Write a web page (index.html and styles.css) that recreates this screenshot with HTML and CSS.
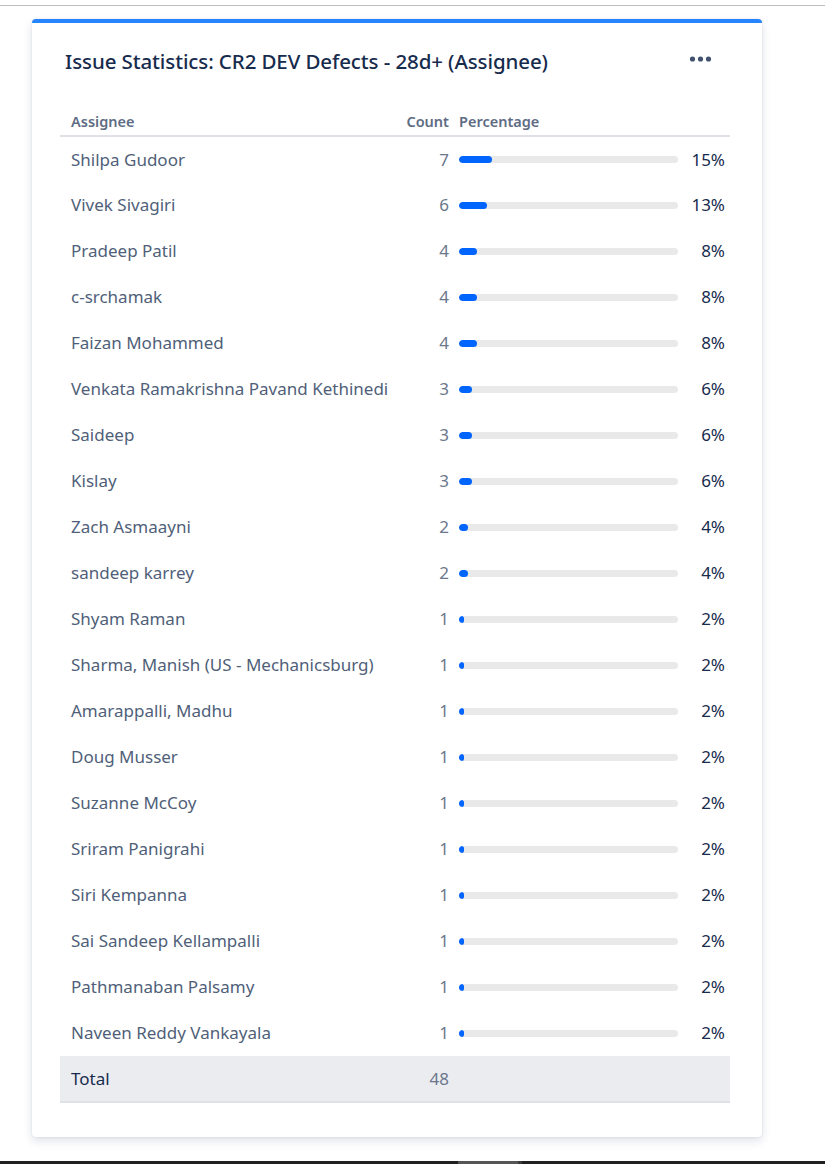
FILE: index.html
```html
<!DOCTYPE html>
<html lang="en">
<head>
<meta charset="utf-8">
<title>Issue Statistics</title>
<link rel="stylesheet" href="styles.css">
</head>
<body>
<div class="topline"></div>
<div class="page">
  <section class="card">
    <header class="card-head">
      <h2 class="title">Issue Statistics: CR2 DEV Defects - 28d+ (Assignee)</h2>
      <button class="more" aria-label="More">
        <svg width="24" height="10" viewBox="0 0 24 10"><circle cx="4.5" cy="5" r="2.6"/><circle cx="12.5" cy="5" r="2.6"/><circle cx="20.5" cy="5" r="2.6"/></svg>
      </button>
    </header>
    <table class="stats">
      <colgroup><col class="c-name"><col class="c-count"><col class="c-pct"></colgroup>
      <thead>
        <tr><th class="name">Assignee</th><th class="count">Count</th><th class="pct">Percentage</th></tr>
      </thead>
      <tbody>
        <tr><td class="name">Shilpa Gudoor</td><td class="count">7</td><td class="pct"><div class="pc"><div class="bar"><div class="fill" style="width:15%"></div></div><span class="pv">15%</span></div></td></tr>
        <tr><td class="name">Vivek Sivagiri</td><td class="count">6</td><td class="pct"><div class="pc"><div class="bar"><div class="fill" style="width:13%"></div></div><span class="pv">13%</span></div></td></tr>
        <tr><td class="name">Pradeep Patil</td><td class="count">4</td><td class="pct"><div class="pc"><div class="bar"><div class="fill" style="width:8%"></div></div><span class="pv">8%</span></div></td></tr>
        <tr><td class="name">c-srchamak</td><td class="count">4</td><td class="pct"><div class="pc"><div class="bar"><div class="fill" style="width:8%"></div></div><span class="pv">8%</span></div></td></tr>
        <tr><td class="name">Faizan Mohammed</td><td class="count">4</td><td class="pct"><div class="pc"><div class="bar"><div class="fill" style="width:8%"></div></div><span class="pv">8%</span></div></td></tr>
        <tr><td class="name">Venkata Ramakrishna Pavand Kethinedi</td><td class="count">3</td><td class="pct"><div class="pc"><div class="bar"><div class="fill" style="width:6%"></div></div><span class="pv">6%</span></div></td></tr>
        <tr><td class="name">Saideep</td><td class="count">3</td><td class="pct"><div class="pc"><div class="bar"><div class="fill" style="width:6%"></div></div><span class="pv">6%</span></div></td></tr>
        <tr><td class="name">Kislay</td><td class="count">3</td><td class="pct"><div class="pc"><div class="bar"><div class="fill" style="width:6%"></div></div><span class="pv">6%</span></div></td></tr>
        <tr><td class="name">Zach Asmaayni</td><td class="count">2</td><td class="pct"><div class="pc"><div class="bar"><div class="fill" style="width:4%"></div></div><span class="pv">4%</span></div></td></tr>
        <tr><td class="name">sandeep karrey</td><td class="count">2</td><td class="pct"><div class="pc"><div class="bar"><div class="fill" style="width:4%"></div></div><span class="pv">4%</span></div></td></tr>
        <tr><td class="name">Shyam Raman</td><td class="count">1</td><td class="pct"><div class="pc"><div class="bar"><div class="fill" style="width:2%"></div></div><span class="pv">2%</span></div></td></tr>
        <tr><td class="name">Sharma, Manish (US - Mechanicsburg)</td><td class="count">1</td><td class="pct"><div class="pc"><div class="bar"><div class="fill" style="width:2%"></div></div><span class="pv">2%</span></div></td></tr>
        <tr><td class="name">Amarappalli, Madhu</td><td class="count">1</td><td class="pct"><div class="pc"><div class="bar"><div class="fill" style="width:2%"></div></div><span class="pv">2%</span></div></td></tr>
        <tr><td class="name">Doug Musser</td><td class="count">1</td><td class="pct"><div class="pc"><div class="bar"><div class="fill" style="width:2%"></div></div><span class="pv">2%</span></div></td></tr>
        <tr><td class="name">Suzanne McCoy</td><td class="count">1</td><td class="pct"><div class="pc"><div class="bar"><div class="fill" style="width:2%"></div></div><span class="pv">2%</span></div></td></tr>
        <tr><td class="name">Sriram Panigrahi</td><td class="count">1</td><td class="pct"><div class="pc"><div class="bar"><div class="fill" style="width:2%"></div></div><span class="pv">2%</span></div></td></tr>
        <tr><td class="name">Siri Kempanna</td><td class="count">1</td><td class="pct"><div class="pc"><div class="bar"><div class="fill" style="width:2%"></div></div><span class="pv">2%</span></div></td></tr>
        <tr><td class="name">Sai Sandeep Kellampalli</td><td class="count">1</td><td class="pct"><div class="pc"><div class="bar"><div class="fill" style="width:2%"></div></div><span class="pv">2%</span></div></td></tr>
        <tr><td class="name">Pathmanaban Palsamy</td><td class="count">1</td><td class="pct"><div class="pc"><div class="bar"><div class="fill" style="width:2%"></div></div><span class="pv">2%</span></div></td></tr>
        <tr><td class="name">Naveen Reddy Vankayala</td><td class="count">1</td><td class="pct"><div class="pc"><div class="bar"><div class="fill" style="width:2%"></div></div><span class="pv">2%</span></div></td></tr>
      </tbody>
      <tfoot>
        <tr><td class="name">Total</td><td class="count">48</td><td class="pct"></td></tr>
      </tfoot>
    </table>
  </section>
</div>
<div class="taskbar"><span class="tb-a"></span><span class="tb-b"></span><span class="tb-c"></span><span class="tb-d"></span></div>
</body>
</html>
```

FILE: styles.css
```css
* { box-sizing: border-box; }

html, body {
  margin: 0;
  padding: 0;
  background: #ffffff;
}

body {
  width: 825px;
  height: 1164px;
  overflow: hidden;
  font-family: "Noto Sans", "Open Sans", sans-serif;
  color: #172b4d;
  display: flex;
  flex-direction: column;
}

.topline {
  margin-top: 5px;
  height: 1px;
  background: #bdbdbd;
}

.page {
  flex: 1;
  padding: 13px 0 0 32px;
}

.card {
  width: 730px;
  background: #fff;
  border-top: 4px solid #2684ff;
  border-radius: 4px;
  box-shadow: 0 4px 10px rgba(9, 30, 66, 0.13), 0 0 2px rgba(9, 30, 66, 0.12);
  padding: 24px 32px 34px 28px;
}

.card-head {
  display: flex;
  align-items: center;
  justify-content: space-between;
  height: 28px;
  padding-left: 5px;
}

.title {
  margin: 0;
  font-size: 20.5px;
  font-weight: 500;
  line-height: 28px;
  color: #172b4d;
  letter-spacing: -0.1px;
}

.more {
  border: 0;
  background: none;
  padding: 0;
  margin-right: 18px;
  margin-top: -4px;
  width: 24px;
  height: 10px;
  display: flex;
}

.more svg { fill: #42526e; }

.stats {
  width: 670px;
  margin-top: 33px;
  border-collapse: collapse;
  table-layout: fixed;
}

.c-name { width: 330px; }
.c-count { width: 64px; }
.c-pct { width: 276px; }

.stats th {
  font-size: 14.5px;
  font-weight: 600;
  color: #5e6c84;
  height: 28px;
  padding: 0 5px 4px 11px;
  vertical-align: bottom;
  text-align: left;
  border-bottom: 2px solid #dfe1e6;
  line-height: 20px;
}

.stats th.count { text-align: right; padding: 0 5px 4px 0; }
.stats th.pct { padding-left: 5px; }

.stats td {
  height: 46px;
  padding: 0;
  font-size: 17px;
  line-height: 22px;
  vertical-align: middle;
}

.stats td.name {
  padding-left: 11px;
  color: #505f79;
  white-space: nowrap;
}

.stats td.count {
  text-align: right;
  padding-right: 5px;
  color: #6b778c;
}

.stats td.pct { padding: 0 5px; }

.pc {
  display: flex;
  align-items: center;
}

.bar {
  width: 219px;
  height: 7px;
  border-radius: 4px;
  background: #e9e9e9;
  overflow: hidden;
}

.fill {
  height: 100%;
  min-width: 5px;
  border-radius: 4px;
  background: #0065ff;
}

.pv {
  flex: 1;
  text-align: right;
  color: #172b4d;
}

.stats tfoot td {
  background: #ebecf0;
  border-bottom: 2px solid #dfe1e6;
}

.stats tfoot td.name { color: #172b4d; }
.stats tfoot td.count { color: #6b778c; }

.taskbar {
  height: 3px;
  display: flex;
  background: #202020;
}

.tb-a { width: 458px; }
.tb-b { width: 60px; background: #555; }
.tb-c { width: 4px; background: #3a3a3a; }
.tb-d { flex: 1; }
```
